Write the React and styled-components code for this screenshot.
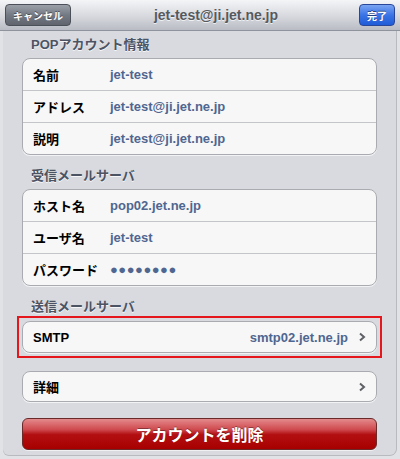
import React from 'react';
import styled, { createGlobalStyle } from 'styled-components';

const GlobalStyle = createGlobalStyle`
    html, body {
        margin: 0;
        padding: 0;
        background: #e4e5e8;
    }
    body {
        font-family: "Liberation Sans", Arial, "Noto Sans CJK JP", sans-serif;
    }
`;

const Frame = styled.div`
    width: 400px;
    height: 459px;
    box-sizing: border-box;
    padding: 0 4px 4px 3px;
    background: #e1e2e5;
    overflow: hidden;
`;

const Sheet = styled.div`
    height: 100%;
    background: #d9dadf;
    border-radius: 0 0 6px 6px;
    box-shadow: 1px 0 0 #b8bac0, 0 1px 0 #b8bac0;
    display: flex;
    flex-direction: column;
`;

const NavBar = styled.div`
    height: 31px;
    box-sizing: border-box;
    flex-shrink: 0;
    margin: 0 -4px 0 -3px;
    padding: 0 5px;
    display: flex;
    align-items: center;
    justify-content: space-between;
    background: linear-gradient(#f4f5f7, #d6d8dd 55%, #b9bcc4);
    border-bottom: 1px solid #8f949c;
`;

const BarButton = styled.div`
    height: 22px;
    box-sizing: border-box;
    padding: 0 7px;
    display: flex;
    align-items: center;
    border-radius: 4px;
    font-size: 10px;
    font-weight: bold;
    color: #fff;
    text-shadow: 0 -1px 0 rgba(0, 0, 0, 0.45);
    border: 1px solid ${p => (p.$primary ? '#29479a' : '#4b4f57')};
    background: ${p =>
        p.$primary
            ? 'linear-gradient(#7aa4f2, #3a74e6 50%, #1e5bd6)'
            : 'linear-gradient(#9ba0a8, #747a84 50%, #5f646d)'};
    min-width: ${p => (p.$primary ? '22px' : '45px')};
    justify-content: center;
`;

const Title = styled.div`
    font-size: 14px;
    font-weight: bold;
    color: #55595f;
    text-shadow: 0 1px 0 rgba(255, 255, 255, 0.7);
    padding-left: 2px;
`;

const Content = styled.div`
    padding: 0 19px;
    display: flex;
    flex-direction: column;
`;

const SectionHeader = styled.div`
    font-size: 13px;
    font-weight: bold;
    color: #4c5363;
    text-shadow: 0 1px 0 rgba(255, 255, 255, 0.8);
    padding: 5px 0 0 9px;
    height: 18px;
    line-height: 18px;
    margin-bottom: 4px;
`;

const Group = styled.div`
    background: #f7f7f7;
    border: 1px solid #a9abb0;
    border-radius: 8px;
    box-shadow: 0 1px 0 #f2f3f5;
    overflow: hidden;
`;

const Row = styled.div`
    height: ${p => p.$h || 31}px;
    display: flex;
    align-items: center;
    padding: 0 10px;
    font-size: 13px;
    & + & {
        border-top: 1px solid #c4c5c9;
    }
`;

const Label = styled.div`
    width: 77px;
    font-weight: bold;
    color: #000;
    flex-shrink: 0;
`;

const Value = styled.div`
    flex: 1;
    font-weight: bold;
    color: #4f6690;
    text-align: ${p => (p.$right ? 'right' : 'left')};
    letter-spacing: ${p => (p.$dots ? '0.5px' : '0')};
`;

const Chevron = styled.svg`
    width: 8px;
    height: 10px;
    margin-left: 10px;
    flex-shrink: 0;
`;

const Highlight = styled.div`
    margin: -4px -5px 0 -5px;
    border: 2px solid #e5171c;
    padding: 3px;
`;

const Spacer = styled.div`
    height: ${p => p.$h}px;
    flex-shrink: 0;
`;

const DeleteButton = styled.div`
    height: 32px;
    box-sizing: border-box;
    border: 1px solid #6a2a2a;
    border-radius: 6px;
    display: flex;
    align-items: center;
    justify-content: center;
    font-size: 16px;
    font-weight: bold;
    color: #fff;
    text-shadow: 0 -1px 0 rgba(0, 0, 0, 0.35);
    background: linear-gradient(#e38a8c, #cf4a4e 35%, #b30f12 52%, #a80000);
    box-shadow: 0 1px 0 rgba(255, 255, 255, 0.6);
`;

const Arrow = () => (
    <Chevron viewBox="0 0 8 10">
        <path d="M2 1.5 L6 5 L2 8.5" fill="none" stroke="#5f6166" strokeWidth="2" />
    </Chevron>
);

export default function App() {
    return (
        <>
            <GlobalStyle />
            <Frame>
                <Sheet>
                    <NavBar>
                        <BarButton>キャンセル</BarButton>
                        <Title>jet-test@ji.jet.ne.jp</Title>
                        <BarButton $primary>完了</BarButton>
                    </NavBar>
                    <Content>
                        <SectionHeader>POPアカウント情報</SectionHeader>
                        <Group>
                            <Row>
                                <Label>名前</Label>
                                <Value>jet-test</Value>
                            </Row>
                            <Row>
                                <Label>アドレス</Label>
                                <Value>jet-test@ji.jet.ne.jp</Value>
                            </Row>
                            <Row>
                                <Label>説明</Label>
                                <Value>jet-test@ji.jet.ne.jp</Value>
                            </Row>
                        </Group>
                        <Spacer $h={7} />
                        <SectionHeader>受信メールサーバ</SectionHeader>
                        <Group>
                            <Row>
                                <Label>ホスト名</Label>
                                <Value>pop02.jet.ne.jp</Value>
                            </Row>
                            <Row>
                                <Label>ユーザ名</Label>
                                <Value>jet-test</Value>
                            </Row>
                            <Row>
                                <Label>パスワード</Label>
                                <Value $dots>●●●●●●●●</Value>
                            </Row>
                        </Group>
                        <Spacer $h={7} />
                        <SectionHeader>送信メールサーバ</SectionHeader>
                        <Highlight>
                            <Group>
                                <Row $h={30}>
                                    <Label>SMTP</Label>
                                    <Value $right>smtp02.jet.ne.jp</Value>
                                    <Arrow />
                                </Row>
                            </Group>
                        </Highlight>
                        <Spacer $h={13} />
                        <Group>
                            <Row $h={29}>
                                <Label>詳細</Label>
                                <Value />
                                <Arrow />
                            </Row>
                        </Group>
                        <Spacer $h={16} />
                        <DeleteButton>アカウントを削除</DeleteButton>
                    </Content>
                </Sheet>
            </Frame>
        </>
    );
}
